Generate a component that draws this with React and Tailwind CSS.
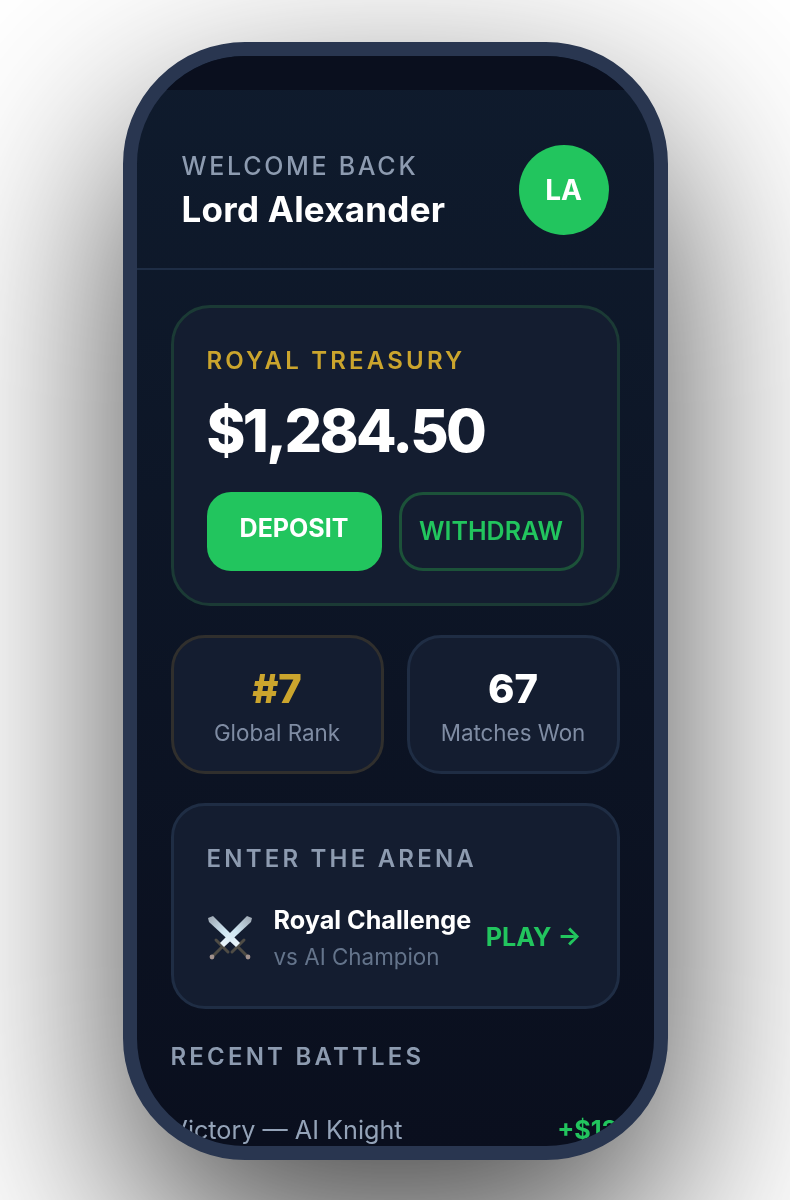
// crossed swords, drawn because no emoji font is available
function Swords() {
    return (
        <svg width="46" height="46" viewBox="0 0 46 46" className="shrink-0">
            <defs>
                <linearGradient id="blade" x1="0" y1="0" x2="1" y2="1">
                    <stop offset="0" stopColor="#9aa3ae" />
                    <stop offset="0.5" stopColor="#cfe6f2" />
                    <stop offset="1" stopColor="#eef6fb" />
                </linearGradient>
                <linearGradient id="blade2" x1="1" y1="0" x2="0" y2="1">
                    <stop offset="0" stopColor="#9aa3ae" />
                    <stop offset="0.5" stopColor="#cfe6f2" />
                    <stop offset="1" stopColor="#eef6fb" />
                </linearGradient>
            </defs>
            {/* guards and grips */}
            <path d="M6 41 L17 30 M9 25 L21 37" stroke="#4f4c45" strokeWidth="3" strokeLinecap="round" />
            <path d="M40 41 L29 30 M37 25 L25 37" stroke="#4f4c45" strokeWidth="3" strokeLinecap="round" />
            <circle cx="5" cy="42" r="2.4" fill="#a2928e" />
            <circle cx="41" cy="42" r="2.4" fill="#a2928e" />
            {/* blades */}
            <path d="M1 3 L6 1 L33 28 L29 32 L2 7 Z" fill="url(#blade)" />
            <path d="M45 3 L40 1 L13 28 L17 32 L44 7 Z" fill="url(#blade2)" />
        </svg>
    );
}

export default function App() {
    return (
        <div className="h-[1200px] overflow-hidden bg-white pt-[42px] font-['Inter',sans-serif]">
            <div className="mx-auto w-[545px] drop-shadow-[0_84px_105px_rgba(0,0,0,0.72)]">
                <div className="flex h-[1118px] flex-col overflow-hidden rounded-[122px] border-[14px] border-[#293650] bg-gradient-to-b from-[#0f1b2d] to-[#0a0f1e]">
                    {/* status bar */}
                    <div className="h-[34px] shrink-0 bg-[#0a0f1e]" />

                    {/* header */}
                    <div className="flex h-[180px] shrink-0 items-center justify-between border-b-2 border-[#1e2d45] px-[45px] pt-[22px]">
                        <div>
                            <p className="text-[25px] leading-[34px] font-medium tracking-[2.7px] text-[#8d9bb0]">WELCOME BACK</p>
                            <p className="mt-[3px] text-[35px] leading-[46px] font-bold tracking-[0.25px] text-white">Lord Alexander</p>
                        </div>
                        <div className="flex h-[90px] w-[90px] items-center justify-center rounded-full bg-[#22c55e] text-[28px] font-bold text-white">LA</div>
                    </div>

                    {/* content */}
                    <div className="flex flex-col px-[34px] pt-[35px]">
                        <div className="h-[301px] rounded-[39px] border-[3px] border-[#1b3a35] bg-[#141d30] px-[33px] pt-[35px]">
                            <p className="text-[24px] leading-[36px] font-semibold tracking-[3.2px] text-[#cba52d]">ROYAL TREASURY</p>
                            <p className="mt-[12px] text-[59px] leading-[80px] font-extrabold tracking-[-2.6px] text-white">$1,284.50</p>
                            <div className="mt-[21px] flex gap-[17px]">
                                <button className="h-[79px] w-[175px] rounded-[24px] bg-[#22c55e] pb-[5px] text-[25px] font-bold text-white">DEPOSIT</button>
                                <button className="h-[79px] w-[185px] rounded-[24px] border-[3px] border-[#1c5239] text-[25px] font-semibold text-[#22c55e]">WITHDRAW</button>
                            </div>
                        </div>

                        <div className="mt-[29px] grid grid-cols-2 gap-[23px]">
                            <div className="flex h-[139px] flex-col items-center rounded-[34px] border-[3px] border-[#302f2d] bg-[#141d30] pt-[27px]">
                                <p className="text-[40px] leading-[48px] font-extrabold text-[#cba52d]">#7</p>
                                <p className="mt-[3px] text-[22.4px] leading-[34px] text-[#7f8ca3]">Global Rank</p>
                            </div>
                            <div className="flex h-[139px] flex-col items-center rounded-[34px] border-[3px] border-[#1f2d44] bg-[#141d30] pt-[27px]">
                                <p className="text-[40px] leading-[48px] font-extrabold text-white">67</p>
                                <p className="mt-[3px] text-[22.4px] leading-[34px] text-[#7f8ca3]">Matches Won</p>
                            </div>
                        </div>

                        <div className="mt-[29px] h-[206px] rounded-[34px] border-[3px] border-[#1f2d44] bg-[#141d30] px-[33px] pt-[33px]">
                            <p className="text-[24px] leading-[40px] font-semibold tracking-[3.2px] text-[#8d9bb0]">ENTER THE ARENA</p>
                            <div className="mt-[23px] flex items-center">
                                <Swords />
                                <div className="ml-[21px] grow">
                                    <p className="text-[25.2px] leading-[36px] font-bold text-white">Royal Challenge</p>
                                    <p className="mt-[2px] text-[22.4px] leading-[34px] text-[#64748b]">vs AI Champion</p>
                                </div>
                                <span className="mr-[2px] text-[25.2px] font-bold whitespace-nowrap text-[#22c55e]">PLAY →</span>
                            </div>
                        </div>

                        <p className="mt-[28px] text-[24px] leading-[40px] font-semibold tracking-[3.2px] text-[#8d9bb0]">RECENT BATTLES</p>

                        <div className="mt-[33px] flex items-center justify-between">
                            <span className="text-[25.2px] leading-[40px] text-[#94a3b8]">Victory — AI Knight</span>
                            <span className="mr-[2px] text-[25.2px] leading-[40px] font-bold text-[#22c55e]">+$12</span>
                        </div>
                    </div>
                </div>
            </div>
        </div>
    );
}
